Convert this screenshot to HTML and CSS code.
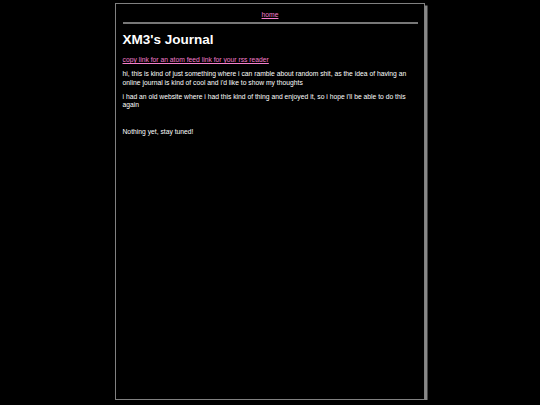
FILE: index.html
```html
<!DOCTYPE html>
<html lang="en">
<head>
<meta charset="utf-8">
<title>XM3's Journal</title>
<link rel="stylesheet" href="styles.css">
</head>
<body>
<div class="page">
  <nav class="nav"><a href="#">home</a></nav>
  <hr class="rule">
  <h1 class="title">XM3's Journal</h1>
  <p class="text"><a href="#">copy link for an atom feed link for your rss reader</a></p>
  <p class="text">hi, this is kind of just something where i can ramble about random shit, as the idea of having an online journal is kind of cool and i'd like to show my thoughts</p>
  <p class="text">i had an old website where i had this kind of thing and enjoyed it, so i hope i'll be able to do this again</p>
  <div class="posts">
    <p class="text">Nothing yet, stay tuned!</p>
  </div>
</div>
</body>
</html>
```
FILE: styles.css
```css
html, body {
  margin: 0;
  padding: 0;
  background: #000;
}
body {
  padding-top: 3.4px;
  font-family: "Liberation Sans", Arial, sans-serif;
  font-size: 6.75px;
  line-height: 8.4px;
  color: #fff;
}
.page {
  box-sizing: border-box;
  width: 310px;
  height: 397px;
  margin: 0 auto;
  padding: 6.5px 6.5px;
  border: 1px solid #808080;
  box-shadow: 2.5px 2.5px 0 #888;
  background: #000;
}
a {
  color: #f57fcc;
}
.nav {
  text-align: center;
}
.rule {
  border: none;
  height: 1.6px;
  background: #777;
  margin: 2.8px 0 0;
}
.title {
  font-size: 13.5px;
  line-height: 15.5px;
  font-weight: bold;
  margin: 8.5px 0;
}
.text {
  margin: 5.8px 0;
}
.posts {
  margin-top: 18.6px;
}
```
